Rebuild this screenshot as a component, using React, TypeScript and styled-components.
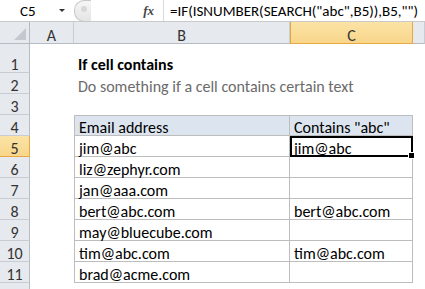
import styled, { createGlobalStyle } from "styled-components";

const GlobalStyle = createGlobalStyle`
  html, body {
    margin: 0;
    padding: 0;
    background: #ffffff;
  }
  body {
    font-family: Carlito, "Liberation Sans", Arial, sans-serif;
  }
`;

const Sheet = styled.div`
  width: 425px;
  height: 289px;
  overflow: hidden;
  background: #ffffff;
  display: flex;
  flex-direction: column;
`;

const FormulaBar = styled.div`
  height: 21px;
  display: flex;
  align-items: center;
  border-bottom: 1px solid #c9c9c9;
  background: #ffffff;
  font-size: 15px;
  color: #000;
`;

const NameBox = styled.div`
  width: 74px;
  height: 100%;
  display: flex;
  align-items: center;
  padding-left: 20px;
  box-sizing: border-box;
  position: relative;
`;

const DropArrow = styled.span`
  position: absolute;
  left: 59px;
  top: 9px;
  width: 0;
  height: 0;
  border-left: 3px solid transparent;
  border-right: 3px solid transparent;
  border-top: 3px solid #333;
`;

const Splitter = styled.div`
  width: 16px;
  height: 20px;
  border-radius: 10px 0 0 10px;
  border: 1px solid #c8c8c8;
  border-right: none;
  background: linear-gradient(#f6f6f6, #e4e4e4);
  position: relative;
  &::after {
    content: "";
    position: absolute;
    left: 6px;
    top: 5px;
    width: 6px;
    height: 6px;
    border-radius: 50%;
    background: #d8d8d8;
  }
`;

const FxArea = styled.div`
  width: 72px;
  display: flex;
  justify-content: flex-end;
  padding-right: 9px;
  box-sizing: border-box;
  font-family: "Liberation Serif", serif;
  font-style: italic;
  font-weight: bold;
  font-size: 13px;
  color: #444;
`;

const Formula = styled.div`
  padding-left: 6px;
  border-left: 1px solid #dadada;
  height: 100%;
  display: flex;
  align-items: center;
  white-space: nowrap;
`;

const Gap = styled.div`
  height: 2px;
  background: #e3e6ea;
`;

const Grid = styled.div`
  display: grid;
  grid-template-columns: 30px 44px 216px 123px 12px;
  grid-template-rows: 22px 29px repeat(10, 21px) 10px;
`;

const Corner = styled.div`
  background: #e6e9ee;
  border-right: 1px solid #b6bcc6;
  border-bottom: 1px solid #b6bcc6;
  position: relative;
  &::after {
    content: "";
    position: absolute;
    right: 3px;
    bottom: 3px;
    width: 0;
    height: 0;
    border-left: 12px solid transparent;
    border-bottom: 12px solid #c5c9cf;
  }
`;

const ColHead = styled.div<{ $sel?: boolean }>`
  background: ${(p) => (p.$sel ? "linear-gradient(#fbe3a6, #f8d68a)" : "#e6e9ee")};
  border-right: 1px solid ${(p) => (p.$sel ? "#e7a844" : "#c9cdd3")};
  border-bottom: 1px solid ${(p) => (p.$sel ? "#e7a844" : "#b6bcc6")};
  ${(p) => (p.$sel ? "border-left: 1px solid #e7a844;" : "")}
  display: flex;
  align-items: flex-end;
  justify-content: center;
  font-size: 16px;
  line-height: 12px;
  padding-bottom: 1px;
  box-sizing: border-box;
  color: #333;
`;

const RowHead = styled.div<{ $sel?: boolean }>`
  background: ${(p) => (p.$sel ? "linear-gradient(#fbe3a6, #f8d68a)" : "#e6e9ee")};
  border-right: 1px solid ${(p) => (p.$sel ? "#e7a844" : "#b6bcc6")};
  border-bottom: 1px solid ${(p) => (p.$sel ? "#e7a844" : "#c9cdd3")};
  display: flex;
  align-items: flex-end;
  justify-content: center;
  font-size: 16px;
  line-height: 12px;
  padding-bottom: 1px;
  color: #333;
  box-sizing: border-box;
`;

const Cell = styled.div<{ $head?: boolean; $boxed?: boolean; $first?: boolean; $top?: boolean }>`
  font-size: 16px;
  line-height: 12px;
  color: #000;
  display: flex;
  align-items: flex-end;
  padding: 0 0 1px 4px;
  white-space: nowrap;
  box-sizing: border-box;
  background: ${(p) => (p.$head ? "#dce5ef" : p.$boxed ? "#ffffff" : "transparent")};
  ${(p) =>
    p.$boxed
      ? `border-right: 1px solid #bdbdbd; border-bottom: 1px solid #bdbdbd;`
      : ""}
  ${(p) => (p.$boxed && p.$first ? "border-left: 1px solid #bdbdbd;" : "")}
  ${(p) => (p.$boxed && p.$top ? "border-top: 1px solid #bdbdbd;" : "")}
`;

const Title = styled(Cell)`
  font-weight: bold;
  padding-bottom: 2px;
`;

const Subtitle = styled(Cell)`
  color: #6b6b6b;
`;

const Active = styled(Cell)`
  position: relative;
  border: 2px solid #000;
  padding-left: 2px;
  padding-bottom: 0;
  &::after {
    content: "";
    position: absolute;
    right: -4px;
    bottom: -4px;
    width: 5px;
    height: 5px;
    background: #000;
    border: 1px solid #fff;
  }
`;

const Filler = styled.div`
  background: transparent;
`;

const emails = [
  ["jim@abc", "jim@abc"],
  ["liz@zephyr.com", ""],
  ["jan@aaa.com", ""],
  ["bert@abc.com", "bert@abc.com"],
  ["may@bluecube.com", ""],
  ["tim@abc.com", "tim@abc.com"],
  ["brad@acme.com", ""],
];

export default function App() {
  return (
    <>
      <GlobalStyle />
      <Sheet>
        <FormulaBar>
          <NameBox>
            C5
            <DropArrow />
          </NameBox>
          <Splitter />
          <FxArea>fx</FxArea>
          <Formula>=IF(ISNUMBER(SEARCH("abc",B5)),B5,"")</Formula>
        </FormulaBar>
        <Gap />
        <Grid>
          <Corner />
          <ColHead>A</ColHead>
          <ColHead>B</ColHead>
          <ColHead $sel>C</ColHead>
          <ColHead />

          <RowHead>1</RowHead>
          <Filler />
          <Title>If cell contains</Title>
          <Filler />
          <Filler />

          <RowHead>2</RowHead>
          <Filler />
          <Subtitle>Do something if a cell contains certain text</Subtitle>
          <Filler />
          <Filler />

          <RowHead>3</RowHead>
          <Filler />
          <Filler />
          <Filler />
          <Filler />

          <RowHead>4</RowHead>
          <Filler />
          <Cell $head $boxed $first $top>
            Email address
          </Cell>
          <Cell $head $boxed $top>
            Contains "abc"
          </Cell>
          <Filler />

          {emails.map(([b, c], i) => (
            <Row key={b} n={i + 5} b={b} c={c} />
          ))}

          <RowHead />
          <Filler />
          <Filler />
          <Filler />
          <Filler />
        </Grid>
      </Sheet>
    </>
  );
}

function Row({ n, b, c }: { n: number; b: string; c: string }) {
  const active = n === 5;
  return (
    <>
      <RowHead $sel={active}>{n}</RowHead>
      <Filler />
      <Cell $boxed $first>
        {b}
      </Cell>
      {active ? <Active>{c}</Active> : <Cell $boxed>{c}</Cell>}
      <Filler />
    </>
  );
}
